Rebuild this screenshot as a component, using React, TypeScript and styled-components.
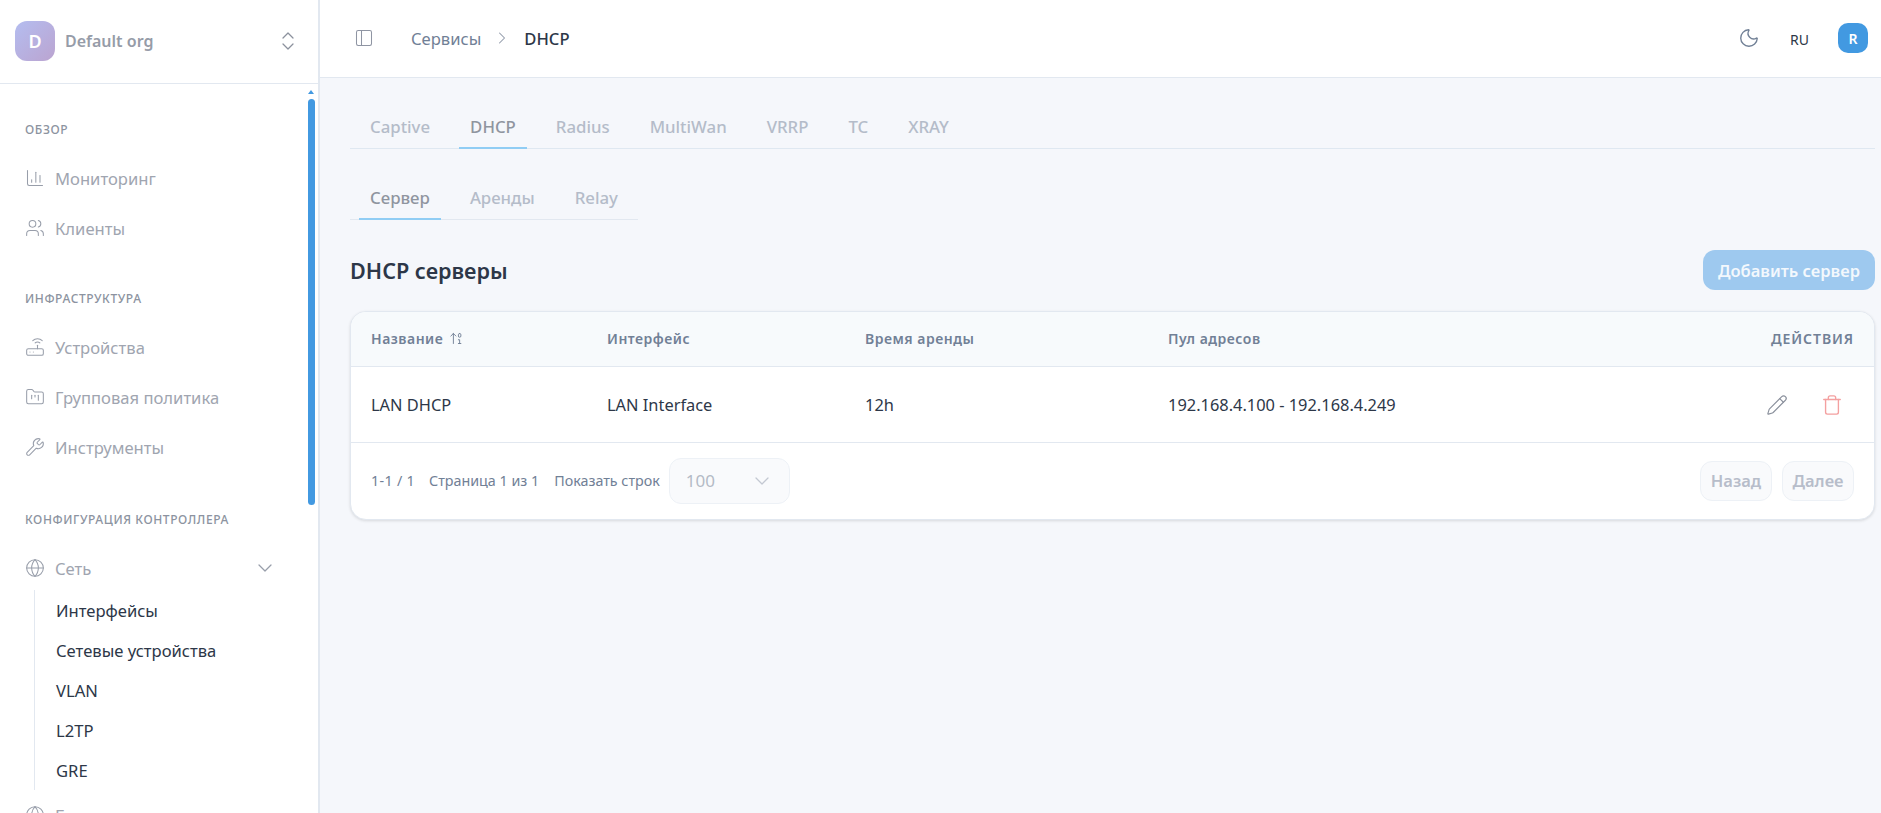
import React from 'react';
import styled, { createGlobalStyle } from 'styled-components';
import {
  ArrowUp01, ChartColumn, ChevronDown, ChevronRight, ChevronsUpDown, FolderKanban, Globe, Moon,
  PanelLeft, Pencil, Router, Trash, Users, Wrench,
} from 'lucide-react';

const Global = createGlobalStyle`
  html, body { margin: 0; padding: 0; height: 100%; overflow: hidden; }
  body { font-family: "Noto Sans", "Open Sans", sans-serif; background: #f5f7fb; color: #2d3748; }
  * { box-sizing: border-box; }
`;

const Shell = styled.div`
  display: flex;
  width: 1881px;
  height: 813px;
  overflow: hidden;
`;

const Sidebar = styled.aside`
  position: relative;
  flex: 0 0 320px;
  height: 813px;
  background: #fff;
  border-right: 2px solid #e2e8f0;
  display: flex;
  flex-direction: column;
  overflow: hidden;
`;

const OrgBar = styled.div`
  flex: 0 0 84px;
  display: flex;
  align-items: center;
  padding: 0 18px 1px 15px;
  border-bottom: 1px solid #e2e8f0;
`;

const OrgAvatar = styled.div`
  width: 40px;
  height: 40px;
  border-radius: 12px;
  background: linear-gradient(135deg, #b4bdf0, #bba4d0);
  color: #fff;
  font-weight: 600;
  font-size: 18px;
  display: flex;
  align-items: center;
  justify-content: center;
`;

const OrgName = styled.div`
  flex: 1;
  margin-left: 10px;
  font-size: 16px;
  font-weight: 600;
  color: #969ca8;
`;

const Thumb = styled.div`
  position: absolute;
  left: 308px;
  top: 99px;
  width: 7px;
  height: 406px;
  border-radius: 4px;
  background: #4299e1;
`;

const ThumbArrow = styled.div`
  position: absolute;
  left: 308px;
  top: 90px;
  width: 0;
  height: 0;
  border-left: 3.5px solid transparent;
  border-right: 3.5px solid transparent;
  border-bottom: 4px solid #4299e1;
`;

const Nav = styled.nav`
  padding: 0 25px;
`;

const NavTitle = styled.div<{ $top: number }>`
  margin-top: ${p => p.$top}px;
  margin-bottom: 11px;
  height: 24px;
  line-height: 24px;
  font-size: 12px;
  font-weight: 500;
  letter-spacing: 0.6px;
  color: #8c93a0;
  text-transform: uppercase;
  white-space: nowrap;
`;

const NavItem = styled.div`
  height: 50px;
  display: flex;
  align-items: center;
  gap: 10px;
  font-size: 16.6px;
  color: #a0a5b0;
  svg { flex: none; color: #989eaa; }
`;

const NavGroupLabel = styled.span`
  flex: 1;
`;

const NavChevron = styled(ChevronDown)`
  margin-right: 16px;
`;

const SubList = styled.div`
  margin-left: 9px;
  margin-top: -3px;
  border-left: 1px solid #e2e8f0;
  padding-left: 21px;
  display: flex;
  flex-direction: column;
`;

const SubItem = styled.div`
  height: 40px;
  display: flex;
  align-items: center;
  font-size: 16.6px;
  color: #2d3748;
`;

const Main = styled.main`
  flex: 1;
  min-width: 0;
  display: flex;
  flex-direction: column;
`;

const TopBar = styled.header`
  flex: 0 0 78px;
  display: flex;
  align-items: center;
  background: #fff;
  border-bottom: 1px solid #e2e8f0;
  padding: 0 13px 1px 34px;
  color: #718096;
`;

const SidebarToggle = styled(PanelLeft)`
  color: #8f95a3;
`;

const Crumb = styled.span<{ $current?: boolean }>`
  font-size: 16.6px;
  font-weight: ${p => (p.$current ? 500 : 400)};
  color: ${p => (p.$current ? '#2d3748' : '#718096')};
`;

const CrumbSep = styled(ChevronRight)`
  margin: 0 12px 0 11px;
  color: #8f98a8;
`;

const BreadcrumbRow = styled.div`
  display: flex;
  align-items: center;
  flex: 1;
  margin-left: 37px;
`;

const Lang = styled.span`
  font-size: 14px;
  font-weight: 400;
  color: #2d3748;
  margin: 2px 29px 0 30px;
`;

const UserBadge = styled.div`
  width: 30px;
  height: 30px;
  border-radius: 10px;
  background: #4299e1;
  color: #fff;
  font-size: 14px;
  font-weight: 600;
  display: flex;
  align-items: center;
  justify-content: center;
`;

const Content = styled.div`
  flex: 1;
  padding: 26px 6px 0 30px;
`;

const TabRow = styled.div`
  display: flex;
  height: 45px;
  padding-left: 9px;
  border-bottom: 1px solid #dfe8f1;
`;

const Tab = styled.div<{ $active?: boolean }>`
  height: 45px;
  padding: 2px 11px 0;
  margin-right: 18px;
  display: flex;
  align-items: center;
  font-size: 16.8px;
  font-weight: 500;
  color: ${p => (p.$active ? '#8f959f' : '#b4bcc9')};
  border-bottom: 2px solid ${p => (p.$active ? '#90cdf4' : 'transparent')};
`;

const SubTabs = styled(TabRow)`
  margin-top: 27px;
  height: 44px;
  width: 288px;
  border-bottom-color: #e2e8f0;
`;

const SubTab = styled(Tab)`
  height: 44px;
  padding-top: 0;
`;

const TitleRow = styled.div`
  margin-top: 30px;
  height: 40px;
  display: flex;
  align-items: center;
  justify-content: space-between;
`;

const Title = styled.h2`
  margin: 0;
  font-size: 21.6px;
  font-weight: 600;
  color: #2d3748;
`;

const AddButton = styled.button`
  width: 172px;
  height: 40px;
  border: none;
  border-radius: 12px;
  background: #9ec9ef;
  color: #f3f8fd;
  font: 600 16.5px "Noto Sans", sans-serif;
`;

const Card = styled.section`
  margin-top: 21px;
  height: 209px;
  background: #fff;
  border: 1px solid #e2e8f0;
  border-radius: 16px;
  box-shadow: 0 1px 3px rgba(0, 0, 0, 0.12);
  overflow: hidden;
`;

const GridRow = styled.div`
  display: grid;
  grid-template-columns: 236px 258px 303px 1fr 180px;
  padding: 0 20px;
  align-items: center;
`;

const HeadRow = styled(GridRow)`
  height: 55px;
  padding-bottom: 2px;
  background: #f7fafc;
  border-bottom: 1px solid #e2e8f0;
  font-size: 14px;
  font-weight: 600;
  letter-spacing: 0.5px;
  color: #718096;
`;

const HeadName = styled.div`
  display: flex;
  align-items: center;
  gap: 6px;
`;

const ActionsHead = styled.div`
  text-align: right;
  letter-spacing: 0.9px;
`;

const BodyRow = styled(GridRow)`
  height: 76px;
  border-bottom: 1px solid #e2e8f0;
  font-size: 16.4px;
  color: #2d3748;
`;

const ActionIcons = styled.div`
  display: flex;
  justify-content: flex-end;
  gap: 33px;
  padding-right: 11px;
`;

const Footer = styled.div`
  height: 75px;
  display: flex;
  align-items: center;
  padding: 0 20px;
  font-size: 14.3px;
  color: #718096;
`;

const FootCount = styled.span`
  margin-right: 14px;
  letter-spacing: 0.3px;
`;

const FootText = styled.span`
  margin-right: 15px;
`;

const LastFootText = styled.span`
  margin-right: 9px;
`;

const SelectBox = styled.div`
  width: 121px;
  height: 46px;
  border: 1px solid #edf1f6;
  border-radius: 12px;
  background: #f9fafc;
  display: flex;
  align-items: center;
  justify-content: space-between;
  padding: 0 15px 0 16px;
  font-size: 17px;
  color: #b4bac6;
`;

const Spacer = styled.div`
  flex: 1;
`;

const PageButton = styled.button`
  width: 72px;
  height: 40px;
  margin-left: 10px;
  border: 1px solid #edf1f6;
  border-radius: 12px;
  background: #f9fafc;
  color: #b7bdca;
  font: 600 16.5px "Noto Sans", sans-serif;
`;

const SectionOne = [
  { Icon: ChartColumn, label: 'Мониторинг' },
  { Icon: Users, label: 'Клиенты' },
];
const SectionTwo = [
  { Icon: Router, label: 'Устройства' },
  { Icon: FolderKanban, label: 'Групповая политика' },
  { Icon: Wrench, label: 'Инструменты' },
];
const NetLinks = ['Интерфейсы', 'Сетевые устройства', 'VLAN', 'L2TP', 'GRE'];
const TopTabs = ['Captive', 'DHCP', 'Radius', 'MultiWan', 'VRRP', 'TC', 'XRAY'];
const LowerTabs = ['Сервер', 'Аренды', 'Relay'];

export default function App() {
  return (
    <Shell>
      <Global />
      <Sidebar>
        <OrgBar>
          <OrgAvatar>D</OrgAvatar>
          <OrgName>Default org</OrgName>
          <ChevronsUpDown size={24} strokeWidth={1.25} color="#8b919d" />
        </OrgBar>
        <Nav>
          <NavTitle $top={34}>Обзор</NavTitle>
          {SectionOne.map(({ Icon, label }) => (
            <NavItem key={label}><Icon size={20} strokeWidth={1.25} />{label}</NavItem>
          ))}
          <NavTitle $top={34}>Инфраструктура</NavTitle>
          {SectionTwo.map(({ Icon, label }) => (
            <NavItem key={label}><Icon size={20} strokeWidth={1.25} />{label}</NavItem>
          ))}
          <NavTitle $top={36}>Конфигурация контроллера</NavTitle>
          <NavItem>
            <Globe size={20} strokeWidth={1.25} />
            <NavGroupLabel>Сеть</NavGroupLabel>
            <NavChevron size={24} strokeWidth={1.25} />
          </NavItem>
          <SubList>
            {NetLinks.map(l => <SubItem key={l}>{l}</SubItem>)}
          </SubList>
          <NavItem>
            <Globe size={20} strokeWidth={1.25} />
            <NavGroupLabel>Беспроводная сеть</NavGroupLabel>
          </NavItem>
        </Nav>
        <ThumbArrow />
        <Thumb />
      </Sidebar>
      <Main>
        <TopBar>
          <SidebarToggle size={20} strokeWidth={1.25} />
          <BreadcrumbRow>
            <Crumb>Сервисы</Crumb>
            <CrumbSep size={20} strokeWidth={1.25} />
            <Crumb $current>DHCP</Crumb>
          </BreadcrumbRow>
          <Moon size={22} strokeWidth={1.5} />
          <Lang>RU</Lang>
          <UserBadge>R</UserBadge>
        </TopBar>
        <Content>
          <TabRow>
            {TopTabs.map(t => <Tab key={t} $active={t === 'DHCP'}>{t}</Tab>)}
          </TabRow>
          <SubTabs>
            {LowerTabs.map(t => <SubTab key={t} $active={t === 'Сервер'}>{t}</SubTab>)}
          </SubTabs>
          <TitleRow>
            <Title>DHCP серверы</Title>
            <AddButton>Добавить сервер</AddButton>
          </TitleRow>
          <Card>
            <HeadRow>
              <HeadName>Название <ArrowUp01 size={15} strokeWidth={1.5} /></HeadName>
              <div>Интерфейс</div>
              <div>Время аренды</div>
              <div>Пул адресов</div>
              <ActionsHead>ДЕЙСТВИЯ</ActionsHead>
            </HeadRow>
            <BodyRow>
              <div>LAN DHCP</div>
              <div>LAN Interface</div>
              <div>12h</div>
              <div>192.168.4.100 - 192.168.4.249</div>
              <ActionIcons>
                <Pencil size={22} strokeWidth={1.25} color="#8b919d" />
                <Trash size={22} strokeWidth={1.5} color="#f4a0a0" />
              </ActionIcons>
            </BodyRow>
            <Footer>
              <FootCount>1-1 / 1</FootCount>
              <FootText>Страница 1 из 1</FootText>
              <LastFootText>Показать строк</LastFootText>
              <SelectBox>100<ChevronDown size={24} strokeWidth={1.25} color="#c3c8d2" /></SelectBox>
              <Spacer />
              <PageButton>Назад</PageButton>
              <PageButton>Далее</PageButton>
            </Footer>
          </Card>
        </Content>
      </Main>
    </Shell>
  );
}
